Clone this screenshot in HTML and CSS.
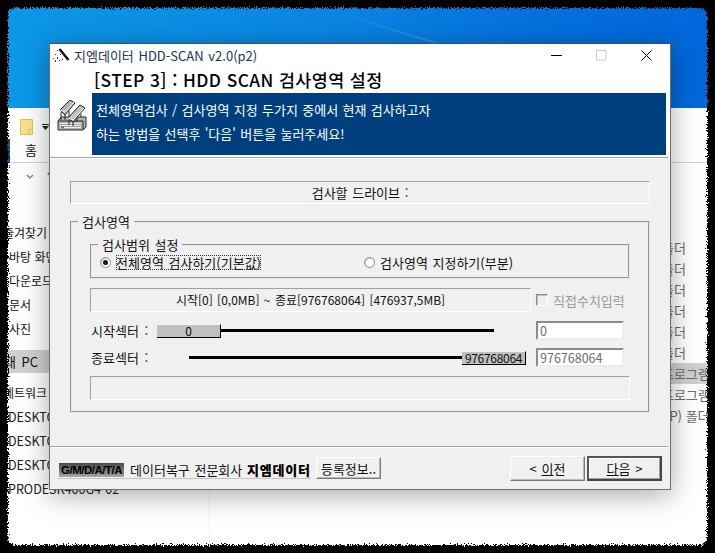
FILE: index.html
```html
<!DOCTYPE html>
<html lang="ko">
<head>
<meta charset="utf-8">
<title>HDD-SCAN</title>
<link rel="stylesheet" href="styles.css">
</head>
<body>
<div class="screen">
  <div class="wallpaper"><div class="streak"></div></div>

  <section class="explorer">
    <div class="ribbon">
      <div class="qat">
        <svg class="folder" width="13" height="16" viewBox="0 0 13 16"><path d="M.5.5h12v15H.5z" fill="#fbe08c" stroke="#e8c24e"/><path d="M9 15.500v-5h3.500" fill="none" stroke="#e8c24e"/></svg>
        <svg class="drop" width="7" height="6" viewBox="0 0 7 6"><path d="M0 0h7v1H0zM0 2h7L3.500 6z" fill="#222"/></svg>
      </div>
      <div class="tabs"><span class="filetab"></span><span class="hometab">홈</span></div>
    </div>
    <div class="navline">
      <svg width="8" height="6" viewBox="0 0 8 6"><path d="M1 1l3 3 3-3" fill="none" stroke="#888" stroke-width="1.500"/></svg>
      <svg width="9" height="13" viewBox="0 0 9 13"><path d="M4.500 1v12M1 4.500L4.500 1 8 4.500" fill="none" stroke="#777" stroke-width="2"/></svg>
    </div>
    <div class="panes">
      <ul class="tree">
        <li class="root">즐겨찾기</li>
        <li>바탕 화면</li>
        <li>다운로드</li>
        <li>문서</li>
        <li>사진</li>
        <li class="sel">내 PC</li>
        <li class="net root">네트워크</li>
        <li class="host">DESKTOP</li>
        <li class="host">DESKTOP</li>
        <li class="host">DESKTOP</li>
        <li class="host">PRODESK400G4-02</li>
      </ul>
      <ul class="files">
        <li>폴더</li><li>폴더</li><li>폴더</li><li>폴더</li><li>폴더</li><li>폴더</li>
        <li class="sel">프로그램</li>
        <li>프로그램</li>
        <li class="sys">(P) 폴더</li>
      </ul>
    </div>
  </section>

  <svg class="frame" width="715" height="553" viewBox="0 0 715 553">
    <defs>
      <filter id="rough" x="0" y="0" width="100%" height="100%" filterUnits="userSpaceOnUse" primitiveUnits="userSpaceOnUse">
        <feTurbulence type="fractalNoise" baseFrequency="0.85" numOctaves="2" seed="4" result="n"/>
        <feDisplacementMap in="SourceGraphic" in2="n" scale="7" xChannelSelector="R" yChannelSelector="G"/>
      </filter>
    </defs>
    <path filter="url(#rough)" fill="#000" fill-rule="evenodd" d="M-30-30H745V583H-30ZM15 8H700a7 7 0 0 1 7 7V538a7 7 0 0 1-7 7H15a7 7 0 0 1-7-7V15a7 7 0 0 1 7-7Z"/>
  </svg>

  <main class="dialog">
    <header class="head">
      <div class="titlebar">
        <svg class="wand" width="17" height="14" viewBox="0 0 17 14">
          <path d="M6.500 1l9 11" stroke="#111" stroke-width="2.400"/>
          <path d="M4 2h1v1H4zM7 6h1v1H7zM2 6h1v1H2zM0 10h1v1H0zM4 9h1v2H4zM2 12h1v2H2zM6 12h1v1H6zM9 11h1v1H9z" fill="#2f2fa8"/>
        </svg>
        <span class="apptitle">지엠데이터 HDD-SCAN v2.0(p2)</span>
        <div class="winbtns">
          <svg width="11" height="11" viewBox="0 0 11 11"><path d="M0 5.500h11" stroke="#000" stroke-width="1"/></svg>
          <svg width="11" height="11" viewBox="0 0 11 11"><path d="M.5.500h9.500v9.500H.5z" fill="none" stroke="#ccc"/></svg>
          <svg width="11" height="11" viewBox="0 0 11 11"><path d="M.5.500l10 10M10.500.500l-10 10" stroke="#000" stroke-width="1"/></svg>
        </div>
      </div>
      <div class="headgrid">
        <svg class="chip" width="31" height="31" viewBox="0 0 31 31">
          <path d="M1 21l3-4h25v10l-3 3H1z" fill="#aeb4ae" stroke="#2c2c2c"/>
          <path d="M1 21h25v9" fill="none" stroke="#2c2c2c"/>
          <path d="M3 23h21v5H3z" fill="#eef2ee"/>
          <path d="M3 24.500h21M3 26.500h21" stroke="#9aa09a"/>
          <path d="M4 27.500h3" stroke="#0a9a8a" stroke-width="1.500"/>
          <path d="M3 10L13 0l5 3L8 15z" fill="#b4b4b4" stroke="#222"/>
          <path d="M3 10l5 2 9-10" fill="none" stroke="#eee"/>
          <path d="M4 12v8M8 15v5M12 11v6" stroke="#222"/>
          <path d="M11 18L23 5l5 3L16 22z" fill="#c2c2c2" stroke="#222"/>
          <path d="M11 18l5 2 11-12" fill="none" stroke="#f2f2f2"/>
          <path d="M12 20v5M16 22v4M20 18v4M24 14v3" stroke="#222"/>
        </svg>
        <div class="headtext">
          <h1 class="step">[STEP 3] : HDD SCAN 검사영역 설정</h1>
          <div class="band">
            <p>전체영역검사 / 검사영역 지정 두가지 중에서 현재 검사하고자</p>
            <p>하는 방법을 선택후 '다음' 버튼을 눌러주세요!</p>
          </div>
        </div>
      </div>
    </header>
    <div class="sep"></div>

    <div class="content">
      <div class="sunken drive">검사할 드라이브 :</div>
      <fieldset class="group outer">
        <legend>검사영역</legend>
        <fieldset class="group inner">
          <legend>검사범위 설정</legend>
          <div class="radios">
            <label class="radio first"><span class="dot on"></span><span class="focus">전체영역 검사하기(기본값)</span></label>
            <label class="radio"><span class="dot"></span><span>검사영역 지정하기(부분)</span></label>
          </div>
        </fieldset>
        <div class="statusrow">
          <div class="sunken status">시작[0] [0,0MB] ~ 종료[976768064] [476937,5MB]</div>
          <label class="manual"><span class="check"></span>직접수치입력</label>
        </div>
        <div class="sliderrow top">
          <span class="slabel">시작섹터 :</span>
          <div class="track">
            <span class="thumb start">0</span>
            <span class="rail"></span>
          </div>
          <span class="field">0</span>
        </div>
        <div class="sliderrow">
          <span class="slabel">종료섹터 :</span>
          <div class="track end">
            <span class="rail"></span>
            <span class="thumb stop">976768064</span>
          </div>
          <span class="field">976768064</span>
        </div>
        <div class="sunken message"></div>
      </fieldset>
    </div>

    <footer class="foot">
      <div class="brand">
        <span class="badge">G/M/D/A/T/A</span>
        <span class="slogan">데이터복구 전문회사 <b>지엠데이터</b></span>
      </div>
      <button class="btn reg" type="button">등록정보..</button>
      <div class="navbtns">
        <button class="btn nav" type="button">&lt; <u>이</u>전</button>
        <button class="btn nav default" type="button"><u>다</u>음 &gt;</button>
      </div>
    </footer>
  </main>
</div>
</body>
</html>
```
FILE: styles.css
```css
* { box-sizing: border-box; }
html, body { margin: 0; padding: 0; height: 100%; background: #000; overflow: hidden; }
body { font-family: "Noto Sans CJK KR", "Noto Sans", sans-serif; font-size: 13px; color: #111; }
ul { list-style: none; margin: 0; padding: 0; }
p { margin: 0; }

.screen { position: relative; width: 715px; height: 553px; overflow: hidden; background: #fff; }

.wallpaper {
  position: absolute; left: 0; top: 0; width: 715px; height: 108px;
  background: linear-gradient(90deg, #0c98e8 0%, #0a86e2 45%, #0470de 75%, #0067da 100%);
  overflow: hidden;
}
.streak {
  position: absolute; left: 330px; top: 28px; width: 120px; height: 2px;
  background: linear-gradient(90deg, rgba(255,255,255,0), rgba(255,255,255,.16));
  transform: rotate(17deg);
}

.explorer { position: absolute; left: 0; top: 108px; width: 715px; height: 445px; background: #fff; }
.ribbon { height: 55px; border-bottom: 1px solid #d0d0d0; }
.qat { display: flex; align-items: center; gap: 9px; height: 30px; padding: 8px 0 0 20px; }
.tabs { display: flex; height: 24px; }
.filetab { width: 10px; height: 24px; margin-top: 1px; background: #0b5cad; }
.hometab { margin-left: 15px; line-height: 24px; font-size: 13px; }
.navline { display: flex; align-items: center; gap: 13px; height: 27px; padding: 0 0 0 26px; }
.panes { display: flex; height: 363px; }
.tree { width: 210px; padding-top: 31px; border-right: 1px solid #efefef; font-size: 12px; }
.tree li { height: 24px; line-height: 24px; padding-left: 9px; white-space: nowrap; }
.tree .root { padding-left: 3px; }
.tree .sel { height: 23px; line-height: 23px; margin-top: 9px; padding-left: 4px; background: #cfcfcf; word-spacing: 2px; font-size: 13px; }
.tree .net { margin-top: 8px; }
.tree .host { padding-left: 8px; font-size: 12.500px; color: #122; }
.files { flex: 1; padding: 47px 0 0 452px; color: #6a6a6a; font-size: 13px; }
.files li { height: 21px; line-height: 21px; white-space: nowrap; }
.files .sel { background: #cfcfcf; }
.files .sys { padding-left: 3px; }

.frame { position: absolute; left: 0; top: 0; }

.dialog {
  position: absolute; left: 49px; top: 43px; width: 622px; height: 447px;
  display: flex; flex-direction: column;
  background: #f0f0f0; border: 1px solid #6e6e6e; border-top-color: #3b5068;
  box-shadow: 0 5px 26px rgba(0,0,0,.34);
}

.head { background: #fff; height: 113px; }
.titlebar { display: flex; align-items: center; height: 22px; padding-left: 3px; }
.wand { margin-right: 4px; }
.apptitle { font-size: 13px; color: #24344e; white-space: nowrap; word-spacing: 1px; }
.winbtns { display: flex; gap: 34px; margin-left: auto; margin-right: 18px; }
.headgrid { display: flex; }
.chip { margin: 34px 4px 0 7px; flex: none; }
.headtext { flex: 1; min-width: 0; }
.step { margin: 0; height: 27px; padding-left: 2px; font-size: 17.400px; line-height: 27px; font-weight: 500; letter-spacing: .4px; white-space: nowrap; color: #000; }
.band { width: 574px; height: 62px; padding: 5px 0 0 4px; background: #003f7e; color: #fff; font-size: 13px; line-height: 24px; word-spacing: .7px; white-space: nowrap; }

.sep { height: 2px; margin-right: 2px; border-top: 1px solid #a2a2a2; border-bottom: 1px solid #fff; }

.content { flex: 1; padding: 22px 20px 0 20px; min-height: 0; }
.sunken { border: 1px solid; border-color: #a0a0a0 #fff #fff #a0a0a0; }
.drive { height: 23px; line-height: 21px; text-align: center; word-spacing: 1px; }

.group { margin: 0; padding: 0; border: 2px groove #e8e8e8; min-width: 0; }
.group legend { padding: 0 4px; line-height: 16px; height: 16px; word-spacing: 1px; }
.outer { height: 199px; margin-top: 10px; padding: 7px 18px 0 18px; }
.outer > legend { margin-left: -12px; }
.inner { height: 42px; padding: 0 8px; }
.inner > legend { margin-left: -2px; }
.radios { display: flex; height: 18px; align-items: center; }
.radio { display: flex; align-items: center; gap: 5px; word-spacing: 1px; white-space: nowrap; }
.radio.first { width: 264px; }
.dot { width: 11px; height: 11px; border-radius: 50%; border: 1px solid #8a8a8a; background: #fff; display: flex; align-items: center; justify-content: center; box-shadow: inset 1px 1px 0 #d0d0d0; flex: none; }
.dot.on::after { content: ""; width: 5px; height: 5px; border-radius: 50%; background: #111; }
.focus { outline: 1px dotted #333; outline-offset: -1px; line-height: 15px; }

.statusrow { display: flex; align-items: center; margin-top: 9px; }
.status { width: 441px; height: 24px; line-height: 22px; text-align: center; font-size: 12px; word-spacing: 1px; }
.manual { display: flex; align-items: center; gap: 5px; margin-left: 5px; color: #9a9a9a; white-space: nowrap; }
.check { width: 12px; height: 12px; border: 1px solid; border-color: #8a8a8a #fff #fff #8a8a8a; box-shadow: inset 1px 1px 0 #c0c0c0; background: #f0f0f0; }

.sliderrow { display: flex; align-items: center; height: 19px; margin-top: 8px; }
.sliderrow.top { margin-top: 9px; }
.slabel { width: 67px; padding-left: 1px; word-spacing: 2px; white-space: nowrap; }
.track { width: 337px; display: flex; align-items: center; }
.track.end { width: 369px; padding-left: 32px; }
.thumb {
  flex: none; width: 64px; height: 14px; line-height: 12px; text-align: center; background: #c0c0c0; color: #111;
  border-bottom: 1px solid #000; border-right: 1px solid #000; border-top: 1px solid #f4f4f4; font-size: 12px;
}
.thumb.stop { letter-spacing: -.3px; }
.rail { flex: 1; height: 3px; background: #000; }
.field {
  width: 88px; height: 19px; margin-left: 42px; padding-left: 2px; line-height: 15px; font-size: 12.500px; color: #6d6d6d; background: #fff;
  border: 2px solid; border-color: #8c8c8c #ededed #ededed #8c8c8c;
}
.track.end + .field { margin-left: 10px; }
.message { height: 24px; margin-top: 9px; width: 540px; }

.foot {
  height: 43px; margin-right: 2px; flex: none; display: flex; align-items: flex-start;
  border-top: 1px solid #a2a2a2; box-shadow: inset 0 1px 0 #fff;
  padding: 9px 6px 0 8px;
}
.brand { display: flex; align-items: center; width: 253px; height: 23px; padding: 5px 0 0 1px; border-bottom: 1px solid #c4c4c4; white-space: nowrap; }
.badge {
  width: 65px; height: 14px; flex: none; text-align: center; font: bold 11.500px/14px "Liberation Sans", sans-serif; letter-spacing: -.5px; color: #000;
  background: linear-gradient(180deg, #4a4a4a 0%, #666 35%, #a8a8a8 100%);
}
.slogan { margin-left: 6px; word-spacing: 1px; }
.slogan b { font-weight: 900; color: #000; letter-spacing: .8px; }
.btn { font: inherit; color: #111; padding: 0; background: #f0f0f0; border: 1px solid; border-color: #fff #7a7a7a #7a7a7a #fff; box-shadow: inset -1px -1px 0 #b8b8b8; white-space: nowrap; }
.reg { width: 65px; height: 22px; margin: 1px 0 0 5px; }
.navbtns { display: flex; gap: 2px; margin-left: auto; }
.nav { width: 75px; height: 25px; word-spacing: 1px; }
.nav.default { border: 2px solid; border-color: #555 #444 #444 #555; box-shadow: inset -1px -1px 0 #a0a0a0, inset 1px 1px 0 #fff; }
```
